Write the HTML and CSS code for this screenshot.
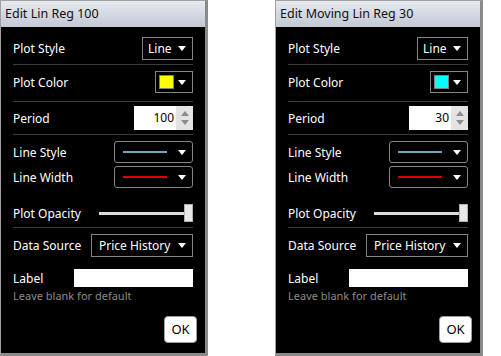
FILE: index.html
```html
<html>
  <head>
    <link rel="stylesheet" href="styles.css">
  </head>
  <body>
    <div class="Desk">
      <div class="Dialog">
        <div class="Title">Edit Lin Reg 100</div>
        <div class="Content">
          <div class="Row rowA">
            <span class="Lbl">Plot Style</span>
            <div class="Drop dropStyle"><span>Line</span><span class="Arrow"></span></div>
          </div>
          <div class="Sep sepA"></div>
          <div class="Row rowB">
            <span class="Lbl">Plot Color</span>
            <div class="Drop dropColor"><span class="Swatch yellow"></span><span class="Arrow"></span></div>
          </div>
          <div class="Sep sepB"></div>
          <div class="Row rowC">
            <span class="Lbl">Period</span>
            <div class="Spin">
              <div class="SpinVal">100</div>
              <div class="SpinBtns"><span class="Up"></span><span class="Down"></span></div>
            </div>
          </div>
          <div class="Sep sepC"></div>
          <div class="Row rowD">
            <span class="Lbl">Line Style</span>
            <div class="Drop dropLine"><span class="Stroke blue"></span><span class="Arrow"></span></div>
          </div>
          <div class="Row rowE">
            <span class="Lbl">Line Width</span>
            <div class="Drop dropLine"><span class="Stroke red"></span><span class="Arrow"></span></div>
          </div>
          <div class="Row rowF">
            <span class="Lbl">Plot Opacity</span>
            <div class="Slider"><div class="Track"></div><div class="Thumb"></div></div>
          </div>
          <div class="Sep sepF"></div>
          <div class="Row rowG">
            <span class="Lbl">Data Source</span>
            <div class="Drop dropSource"><span>Price History</span><span class="Arrow"></span></div>
          </div>
          <div class="Row rowH">
            <span class="Lbl">Label</span>
            <div class="TextBox"></div>
          </div>
          <div class="Hint">Leave blank for default</div>
          <div class="Foot"><div class="OK">OK</div></div>
        </div>
      </div>

      <div class="Dialog">
        <div class="Title">Edit Moving Lin Reg 30</div>
        <div class="Content">
          <div class="Row rowA">
            <span class="Lbl">Plot Style</span>
            <div class="Drop dropStyle"><span>Line</span><span class="Arrow"></span></div>
          </div>
          <div class="Sep sepA"></div>
          <div class="Row rowB">
            <span class="Lbl">Plot Color</span>
            <div class="Drop dropColor"><span class="Swatch cyan"></span><span class="Arrow"></span></div>
          </div>
          <div class="Sep sepB"></div>
          <div class="Row rowC">
            <span class="Lbl">Period</span>
            <div class="Spin">
              <div class="SpinVal">30</div>
              <div class="SpinBtns"><span class="Up"></span><span class="Down"></span></div>
            </div>
          </div>
          <div class="Sep sepC"></div>
          <div class="Row rowD">
            <span class="Lbl">Line Style</span>
            <div class="Drop dropLine"><span class="Stroke blue"></span><span class="Arrow"></span></div>
          </div>
          <div class="Row rowE">
            <span class="Lbl">Line Width</span>
            <div class="Drop dropLine"><span class="Stroke red"></span><span class="Arrow"></span></div>
          </div>
          <div class="Row rowF">
            <span class="Lbl">Plot Opacity</span>
            <div class="Slider"><div class="Track"></div><div class="Thumb"></div></div>
          </div>
          <div class="Sep sepF"></div>
          <div class="Row rowG">
            <span class="Lbl">Data Source</span>
            <div class="Drop dropSource"><span>Price History</span><span class="Arrow"></span></div>
          </div>
          <div class="Row rowH">
            <span class="Lbl">Label</span>
            <div class="TextBox"></div>
          </div>
          <div class="Hint">Leave blank for default</div>
          <div class="Foot"><div class="OK">OK</div></div>
        </div>
      </div>
    </div>
  </body>
</html>
```

FILE: styles.css
```css
body{margin: 0; background: white; font-family: "Noto Sans", "Open Sans", sans-serif;}

.Desk
{
    display: flex;
    gap: 67px;
}

.Dialog
{
    width: 208px;
    height: 356px;
    box-sizing: border-box;
    background: black;
    border: 1px solid #a0a0a0;
    border-right: 3px solid #8a8a8a;
    border-bottom: 3px solid #8a8a8a;
    display: flex;
    flex-direction: column;
}

.Title
{
    height: 26px;
    line-height: 26px;
    padding-left: 4px;
    font-size: 12.5px;
    color: #111;
    background: linear-gradient(#e6e9ee, #c2c9d5);
}

.Content
{
    padding: 0 12px;
    color: white;
    font-size: 12px;
}

.Row
{
    display: flex;
    align-items: center;
    justify-content: space-between;
}

.rowA{margin-top: 10px; height: 23px;}
.rowB{margin-top: 6px; height: 22px;}
.rowC{margin-top: 4px; height: 24px;}
.rowD{margin-top: 6px; height: 22px;}
.rowE{margin-top: 3px; height: 22px;}
.rowF{margin-top: 15px; height: 20px;}
.rowG{margin-top: 6px; height: 23px;}
.rowH{margin-top: 12px; height: 18px;}

.Sep
{
    height: 1px;
    background: #3c3c3c;
}
.sepA{margin-top: 4px;}
.sepB{margin-top: 8px;}
.sepC{margin-top: 4px;}
.sepF{margin-top: 4px;}

.Drop
{
    height: 100%;
    box-sizing: border-box;
    border: 1px solid #858585;
    display: flex;
    align-items: center;
    justify-content: space-between;
    padding: 0 6px 0 5px;
}
.dropStyle{width: 51px;}
.dropColor{width: 38px; padding-left: 3px;}
.dropLine{width: 79px; border-radius: 3px; padding-left: 8px;}
.dropSource{width: 102px; padding-left: 7px;}

.Arrow
{
    width: 0;
    height: 0;
    border-left: 4px solid transparent;
    border-right: 4px solid transparent;
    border-top: 5px solid white;
}

.Swatch
{
    width: 15px;
    height: 14px;
    box-sizing: border-box;
    border: 1px solid #808080;
}
.yellow{background: #ffff00;}
.cyan{background: #00ffff;}

.Stroke
{
    width: 44px;
    height: 2px;
}
.blue{background: #74a7bf;}
.red{background: #e00000;}

.Spin
{
    display: flex;
    height: 24px;
}
.SpinVal
{
    width: 42px;
    background: white;
    color: black;
    text-align: right;
    padding-right: 2px;
    box-sizing: border-box;
    line-height: 24px;
}
.SpinBtns
{
    width: 17px;
    background: #e3e3e3;
    display: flex;
    flex-direction: column;
    align-items: center;
    justify-content: space-around;
    padding: 3px 0;
    box-sizing: border-box;
}
.Up
{
    width: 0;
    height: 0;
    border-left: 4px solid transparent;
    border-right: 4px solid transparent;
    border-bottom: 5px solid #8c8c8c;
}
.Down
{
    width: 0;
    height: 0;
    border-left: 4px solid transparent;
    border-right: 4px solid transparent;
    border-top: 5px solid #8c8c8c;
}

.Slider
{
    width: 94px;
    height: 20px;
    position: relative;
}
.Track
{
    position: absolute;
    left: 0;
    right: 4px;
    top: 9px;
    height: 3px;
    background: #dcdcdc;
}
.Thumb
{
    position: absolute;
    right: 0;
    top: 1px;
    width: 9px;
    height: 18px;
    box-sizing: border-box;
    background: #e8e8e8;
    border: 1px solid #b0b0b0;
}

.TextBox
{
    width: 119px;
    height: 18px;
    background: white;
}

.Hint
{
    margin-top: 2px;
    font-size: 11px;
    line-height: 14px;
    color: #8a8a8a;
}

.Foot
{
    display: flex;
    justify-content: flex-end;
    margin-top: 13px;
    margin-right: -4px;
}
.OK
{
    width: 33px;
    height: 27px;
    box-sizing: border-box;
    background: white;
    border: 1px solid #a0a0a0;
    border-radius: 4px;
    color: black;
    text-align: center;
    line-height: 25px;
    font-size: 13px;
}
```
